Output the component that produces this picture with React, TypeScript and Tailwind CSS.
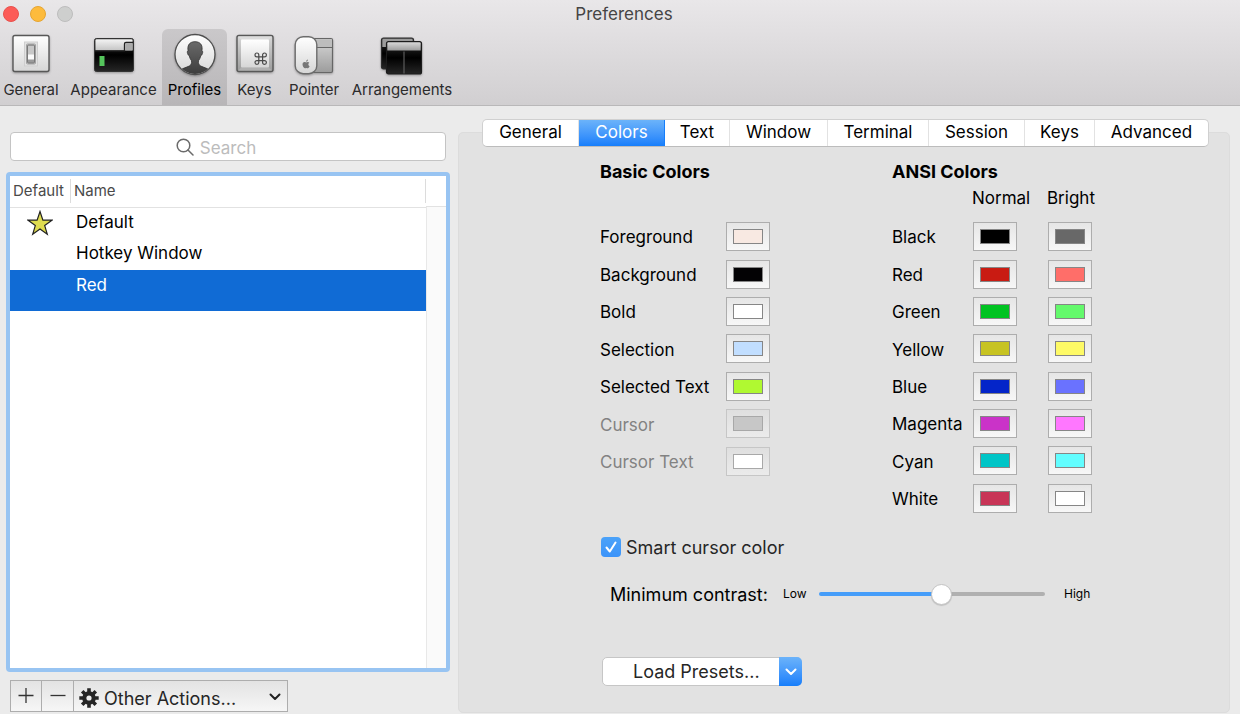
import { useState } from "react";
import type { ReactNode } from "react";

type Swatch = { name: string; value: string; disabled?: boolean };

const basicColors: Swatch[] = [
  { name: "Foreground", value: "#f8e9e2" },
  { name: "Background", value: "#030204" },
  { name: "Bold", value: "#ffffff" },
  { name: "Selection", value: "#c1deff" },
  { name: "Selected Text", value: "#b0f931" },
  { name: "Cursor", value: "#c7c7c7", disabled: true },
  { name: "Cursor Text", value: "#ffffff", disabled: true },
];

const ansiColors = [
  { name: "Black", normal: "#000000", bright: "#686868" },
  { name: "Red", normal: "#c91b12", bright: "#ff6e69" },
  { name: "Green", normal: "#00c321", bright: "#64f96c" },
  { name: "Yellow", normal: "#c7c322", bright: "#fefa66" },
  { name: "Blue", normal: "#0425c9", bright: "#6a72ff" },
  { name: "Magenta", normal: "#ca33c8", bright: "#ff77ff" },
  { name: "Cyan", normal: "#00c5c7", bright: "#62fdff" },
  { name: "White", normal: "#c83557", bright: "#ffffff" },
];

const tabs = [
  { name: "General", width: "w-24" },
  { name: "Colors", width: "w-[86px]" },
  { name: "Text", width: "w-[65px]" },
  { name: "Window", width: "w-[98px]" },
  { name: "Terminal", width: "w-[101px]" },
  { name: "Session", width: "w-24" },
  { name: "Keys", width: "w-[70px]" },
  { name: "Advanced", width: "w-[113px]" },
];

function Gradients() {
  return (
    <svg className="absolute size-0" aria-hidden="true">
      <defs>
        <linearGradient id="plate" x1="0" y1="0" x2="0" y2="1">
          <stop offset="0" stopColor="#ffffff" />
          <stop offset="1" stopColor="#d6d6d6" />
        </linearGradient>
        <linearGradient id="bar" x1="0" y1="0" x2="0" y2="1">
          <stop offset="0" stopColor="#f4f4f4" />
          <stop offset="1" stopColor="#c4c4c4" />
        </linearGradient>
        <linearGradient id="grey" x1="0" y1="0" x2="0" y2="1">
          <stop offset="0" stopColor="#d8d8d8" />
          <stop offset="1" stopColor="#9c9c9c" />
        </linearGradient>
        <linearGradient id="dark" x1="0" y1="0" x2="0" y2="1">
          <stop offset="0" stopColor="#2c2c2c" />
          <stop offset="0.5" stopColor="#000000" />
          <stop offset="1" stopColor="#262626" />
        </linearGradient>
        <linearGradient id="person" x1="0" y1="0" x2="0" y2="1">
          <stop offset="0" stopColor="#6a6a6a" />
          <stop offset="1" stopColor="#3a3a3a" />
        </linearGradient>
        <clipPath id="disc">
          <circle cx="22" cy="22" r="19" />
        </clipPath>
      </defs>
    </svg>
  );
}

function Icon({ children }: { children: ReactNode }) {
  return (
    <svg
      viewBox="0 0 44 44"
      className="size-11 drop-shadow-[0_1px_1px_rgba(0,0,0,0.3)]"
      fill="none"
      aria-hidden="true"
    >
      {children}
    </svg>
  );
}

const GeneralIcon = (
  <Icon>
    <rect x="4" y="2.5" width="36" height="36" rx="2" fill="url(#plate)" stroke="#585858" strokeWidth="1.4" />
    <rect x="15.5" y="9" width="13" height="24" fill="#e2e2e2" stroke="#cfcfcf" />
    <rect x="17.5" y="11" width="9" height="20" rx="1" fill="#cccccc" stroke="#a2a2a2" />
    <rect x="18.5" y="12" width="7" height="18" rx="1" fill="#9a9a9a" stroke="#7a7a7a" />
    <path d="M19 12.800h6v9.200h-6z" fill="#c8c8c8" />
    <path d="M19 21.500h6v5h-6z" fill="#fafafa" />
  </Icon>
);

const AppearanceIcon = (
  <Icon>
    <rect x="2.5" y="5.5" width="39" height="33" rx="2" fill="url(#dark)" stroke="#333" />
    <path d="M3.4 17.5V7.5q0-1.3 1.3-1.3h34.6q1.3 0 1.3 1.3v10z" fill="url(#bar)" />
    <path d="M3 17.8h29.5V11q0-1.5 1.5-1.5h7" stroke="#222" strokeWidth="1.3" />
    <path d="M33.2 17.3V11.5q0-1.3 1.3-1.3h6v7.1z" fill="#aaaaaa" />
    <rect x="7.5" y="23" width="5" height="10" fill="#55c55c" />
  </Icon>
);

const ProfilesIcon = (
  <Icon>
    <circle cx="22" cy="21.500" r="20" fill="url(#plate)" stroke="#4e4e4e" strokeWidth="1.3" />
    <g clipPath="url(#disc)">
      <path
        d="M22 8.700c-5 0-7.4 3-7.1 7.6l.2 1.5c-1 .2-.9 1.6-.5 2.7.3 1.2.8 2 1.6 2 .5 2.4 1.3 4 2.3 5.2.3 2.6-.2 4.3-2.3 5.4-3.5 1.5-7 2.3-8.2 4V43h28v-5.900c-1.200-1.700-4.700-2.500-8.200-4-2.100-1.100-2.600-2.800-2.300-5.400 1-1.200 1.800-2.800 2.300-5.200.8 0 1.300-.8 1.600-2 .4-1.100.5-2.500-.5-2.700l.2-1.500c.3-4.600-2.100-7.600-7.100-7.600z"
        fill="url(#person)"
        stroke="#333"
        strokeWidth="0.8"
      />
    </g>
  </Icon>
);

const KeysIcon = (
  <Icon>
    <rect x="4" y="2.500" width="36" height="36" rx="2" fill="url(#grey)" stroke="#585858" strokeWidth="1.4" />
    <path d="M5 3.500h34l-3.500 3.500h-27z" fill="#dcdcdc" />
    <path d="M5 37.500h34l-3.500-3h-27z" fill="#b0b0b0" />
    <rect x="8" y="6.500" width="28" height="28" rx="1" fill="url(#plate)" />
    <path
      d="M25.800 23.800v-1.900a1.900 1.900 0 1 0-1.900 1.900h7.600a1.900 1.900 0 1 0-1.900-1.900v7.600a1.900 1.900 0 1 0 1.900-1.900h-7.600a1.900 1.900 0 1 0 1.900 1.900z"
      stroke="#4a4a4a"
      strokeWidth="1.200"
    />
  </Icon>
);

const PointerIcon = (
  <Icon>
    <rect x="16" y="5.500" width="24.500" height="34" rx="1.500" fill="url(#grey)" stroke="#666" strokeWidth="1.200" />
    <path d="M22 6.200h17.800v7.800H22z" fill="#bdbdbd" />
    <path d="M22 14.500h18" stroke="#666" />
    <rect x="3.200" y="3.700" width="21.600" height="37" rx="8" fill="url(#plate)" stroke="#6c6c6c" strokeWidth="1.400" />
    <path
      d="M14.200 28.700c0-1.300.7-2 1.700-2.200.1 1.200-.6 2-1.700 2.200zm-.2.700c.6 0 1-.4 1.800-.4.600 0 1.200.3 1.500.8-1.500.9-1.200 2.900.3 3.500-.4 1-1 1.900-1.700 1.900-.6 0-.8-.3-1.500-.3s-1 .3-1.500.3c-1.500 0-3.200-3.900-1.900-5.500.9-1 2-.8 3-.3z"
      fill="#777"
    />
  </Icon>
);

const ArrangementsIcon = (
  <Icon>
    <rect x="1.500" y="5" width="32" height="31" rx="2" fill="url(#dark)" stroke="#2c2c2c" strokeWidth="1.200" />
    <path d="M2.300 14V7q0-1.200 1.200-1.200h28q1.200 0 1.200 1.200v7z" fill="#9b9b9b" />
    <rect x="6.500" y="8.500" width="35" height="32.500" rx="2" fill="url(#dark)" stroke="#1c1c1c" strokeWidth="1.200" />
    <path d="M7.300 17.500V10.500q0-1.300 1.200-1.300h31q1.200 0 1.200 1.300v7z" fill="url(#grey)" />
    <path d="M24 18.500v22" stroke="#6a6a6a" />
  </Icon>
);

const tools = [
  { name: "General", icon: GeneralIcon, box: "w-[65px] pr-[3px]" },
  { name: "Appearance", icon: AppearanceIcon, box: "w-[97px]" },
  { name: "Profiles", icon: ProfilesIcon, box: "w-[65px]" },
  { name: "Keys", icon: KeysIcon, box: "w-[55px]" },
  { name: "Pointer", icon: PointerIcon, box: "w-[64px]" },
  { name: "Arrangements", icon: ArrangementsIcon, box: "w-[112px]" },
];

function ColorWell({ label, value, disabled }: { label: string; value: string; disabled?: boolean }) {
  const [color, setColor] = useState(value);
  return (
    <input
      type="color"
      aria-label={label}
      value={color}
      disabled={disabled}
      onChange={(e) => setColor(e.target.value)}
      className="block h-[29px] w-11 appearance-none border border-[#adadad] bg-linear-to-b from-[#e6e6e6] to-[#f7f7f7] p-[6px] disabled:border-[#c6c6c6] disabled:from-[#dfdfdf] disabled:to-[#ebebeb] [&::-webkit-color-swatch]:rounded-none [&::-webkit-color-swatch]:border [&::-webkit-color-swatch]:border-[#868686] disabled:[&::-webkit-color-swatch]:border-[#a8a8a8] [&::-webkit-color-swatch-wrapper]:p-0"
    />
  );
}

function Toolbar() {
  return (
    <header className="border-b border-[#b9b8b9] bg-linear-to-b from-[#e9e7e9] to-[#d1cfd1]">
      <div className="grid h-[29px] grid-cols-[1fr_auto_1fr]">
        <div className="flex gap-[11px] pt-[6px] pl-[3px]">
          <button aria-label="Close" className="size-4 rounded-full border border-[#e9514d] bg-[#fc5b57]" />
          <button aria-label="Minimize" className="size-4 rounded-full border border-[#e6a532] bg-[#fdbb3c]" />
          <button aria-label="Zoom" disabled className="size-4 rounded-full border border-[#bdbdbd] bg-[#cecfce]" />
        </div>
        <h1 className="pl-2 text-[17px] leading-7 text-[#454445]">Preferences</h1>
      </div>
      <nav className="flex h-[76px]">
        {tools.map((t) => (
          <button
            key={t.name}
            className={`flex flex-col items-center rounded-t-md pt-1 text-[15px] leading-5 ${t.box} ${
              t.name === "Profiles" ? "bg-linear-to-b from-[#cac8ca] to-[#b8b6b8] text-black" : "text-[#2c2b2c]"
            }`}
          >
            {t.icon}
            <span className="pt-[3px]">{t.name}</span>
          </button>
        ))}
      </nav>
    </header>
  );
}

function ProfileList() {
  return (
    <aside className="flex w-[458px] shrink-0 flex-col pt-[26px]">
      <div className="relative mr-3 ml-[10px]">
        <input
          type="search"
          aria-label="Search profiles"
          placeholder="Search"
          className="block h-[29px] w-full rounded border border-[#c4c4c4] bg-white pt-[2px] pl-4 text-center text-[17px] text-black outline-none placeholder:text-[#bcbcbc]"
        />
        <svg
          viewBox="0 0 18 18"
          className="absolute top-[6px] left-[166px] size-[18px]"
          fill="none"
          stroke="#6b6b6b"
          strokeWidth="1.500"
          aria-hidden="true"
        >
          <circle cx="7.500" cy="7.500" r="6.300" />
          <path d="M12 12l5 5" strokeLinecap="round" />
        </svg>
      </div>
      <div className="mt-[11px] mr-2 ml-[6px] flex grow flex-col rounded border-4 border-[#98c4f2] bg-white">
        <div className="flex grow">
          <table className="w-[416px] self-start border-collapse text-left">
            <thead className="text-[15px] text-[#4a4a4a]">
              <tr className="h-[31px] border-b border-[#e2e2e2]">
                <th scope="col" className="w-[61px] p-0 pl-[3px] font-normal">
                  <span className="block border-r border-[#dcdcdc] leading-6">Default</span>
                </th>
                <th scope="col" className="p-0 font-normal">
                  <span className="block border-r border-[#dcdcdc] pl-[3px] leading-6">Name</span>
                </th>
              </tr>
            </thead>
            <tbody className="align-top text-[17px] leading-[30px] text-black">
              <tr className="h-[31px]">
                <td className="p-0">
                  <svg viewBox="0 0 26 26" className="mt-[2px] ml-[17px] size-[26px]" aria-label="Default profile">
                    <path
                      d="M13 1.500l2.900 8.600 9 .1-7.200 5.400 2.600 8.700-7.300-5.200-7.300 5.200 2.600-8.700-7.200-5.400 9-.1z"
                      fill="#dedb4f"
                      stroke="#222"
                      strokeWidth="1.200"
                    />
                  </svg>
                </td>
                <td className="p-0 pl-[5px] leading-7">Default</td>
              </tr>
              <tr className="h-8">
                <td className="p-0" />
                <td className="p-0 pl-[5px]">Hotkey Window</td>
              </tr>
              <tr className="h-[41px] bg-[#106bd5] text-white">
                <td className="p-0" />
                <td className="p-0 pl-[5px]">Red</td>
              </tr>
            </tbody>
          </table>
          <div className="flex grow flex-col">
            <div className="h-[31px] border-b border-[#e2e2e2]" />
            <div className="grow border-l border-[#e8e8e8] bg-[#fafafa]" />
          </div>
        </div>
      </div>
      <div className="mt-2 mb-[2px] ml-[10px] flex h-8 w-[278px] border border-[#adadad] bg-linear-to-b from-[#e3e3e3] to-[#f6f6f6]">
        <button aria-label="Add profile" className="flex w-[31px] items-center justify-center border-r border-[#adadad]">
          <svg viewBox="0 0 16 16" className="size-4" stroke="#333" strokeWidth="1.300" aria-hidden="true">
            <path d="M0.500 7.500h15M8 0v15" />
          </svg>
        </button>
        <button aria-label="Remove profile" className="flex w-8 items-center justify-center border-r border-[#adadad]">
          <svg viewBox="0 0 16 16" className="size-4" stroke="#333" strokeWidth="1.300" aria-hidden="true">
            <path d="M0.500 7.500h15" />
          </svg>
        </button>
        <div className="relative grow">
          <select
            aria-label="Other Actions"
            className="h-full w-full appearance-none bg-transparent pt-1 pl-[30px] text-[18px] text-[#262626] outline-none"
          >
            <option>Other Actions...</option>
          </select>
          <svg viewBox="0 0 20 20" className="pointer-events-none absolute top-[7px] left-[5px] size-5" aria-hidden="true">
            <g stroke="#262626" strokeWidth="3.600">
              <path d="M10 .3v19.400M.3 10h19.400M3.200 3.200l13.600 13.600M16.800 3.200L3.200 16.800" />
            </g>
            <circle cx="10" cy="10" r="6.800" fill="#262626" />
            <circle cx="10" cy="10" r="2.600" fill="#eeeeee" />
          </svg>
          <svg
            viewBox="0 0 12 8"
            className="pointer-events-none absolute top-3 right-[6px] h-2 w-3"
            fill="none"
            stroke="#222"
            strokeWidth="2"
            aria-hidden="true"
          >
            <path d="M1.500 1.500L6 6l4.500-4.500" strokeLinecap="round" strokeLinejoin="round" />
          </svg>
        </div>
      </div>
    </aside>
  );
}

function ColorsPane() {
  const [contrast, setContrast] = useState(54.5);
  return (
    <div className="mx-auto w-[496px] pl-1 text-[17px] text-black">
      <div className="flex justify-between">
        <section className="w-[170px]">
          <h2 className="h-[26px] text-[18px] leading-[26px] font-bold whitespace-nowrap">Basic Colors</h2>
          <div className="mt-[33px] grid h-[262px] grid-rows-7">
            {basicColors.map((c) => (
              <div key={c.name} className="flex items-center justify-between">
                <span className={`pt-[3px] whitespace-nowrap ${c.disabled ? "text-[#828282]" : ""}`}>{c.name}</span>
                <ColorWell label={c.name} value={c.value} disabled={c.disabled} />
              </div>
            ))}
          </div>
        </section>
        <section className="w-[200px]">
          <h2 className="h-[26px] text-[18px] leading-[26px] font-bold">ANSI Colors</h2>
          <div className="grid h-[33px] grid-cols-[75px_44px] pl-20 leading-[26px]">
            <span>Normal</span>
            <span>Bright</span>
          </div>
          <div className="grid h-[299px] grid-rows-8">
            {ansiColors.map((c) => (
              <div key={c.name} className="grid grid-cols-[81px_75px_44px] items-center">
                <span className="pt-[3px]">{c.name}</span>
                <ColorWell label={`${c.name} normal`} value={c.normal} />
                <ColorWell label={`${c.name} bright`} value={c.bright} />
              </div>
            ))}
          </div>
        </section>
      </div>
      <label className="mt-[18px] flex h-6 items-center gap-[5px] text-[18px] text-[#262626]">
        <span className="relative ml-px flex size-5">
          <input
            type="checkbox"
            defaultChecked
            className="peer size-5 appearance-none rounded-[4px] bg-white checked:bg-linear-to-b checked:from-[#4ba2f9] checked:to-[#3b93f9]"
          />
          <svg
            viewBox="0 0 20 20"
            className="pointer-events-none absolute inset-0 hidden size-5 peer-checked:block"
            fill="none"
            stroke="#fff"
            strokeWidth="2"
            strokeLinecap="round"
            strokeLinejoin="round"
            aria-hidden="true"
          >
            <path d="M5.500 10.500l3.300 4 5.700-9" />
          </svg>
        </span>
        Smart cursor color
      </label>
      <div className="mt-[23px] flex h-6 items-center pl-[10px]">
        <label htmlFor="contrast" className="w-[173px] text-[18px] whitespace-nowrap">
          Minimum contrast:
        </label>
        <span className="w-9 text-[12px]">Low</span>
        <input
          id="contrast"
          type="range"
          min="0"
          max="100"
          step="0.5"
          value={contrast}
          onChange={(e) => setContrast(Number(e.target.value))}
          className="h-1 w-[226px] appearance-none rounded-full outline-none [&::-webkit-slider-thumb]:size-[21px] [&::-webkit-slider-thumb]:appearance-none [&::-webkit-slider-thumb]:rounded-full [&::-webkit-slider-thumb]:border [&::-webkit-slider-thumb]:border-[#c4c4c4] [&::-webkit-slider-thumb]:bg-white [&::-webkit-slider-thumb]:shadow-[0_1px_1px_rgba(0,0,0,0.15)]"
          style={{ background: `linear-gradient(to right, #459df9 ${contrast}%, #b0b0b0 ${contrast}%)` }}
        />
        <span className="pl-[19px] text-[12px]">High</span>
      </div>
      <div className="relative mt-[51px] ml-[2px] flex h-[29px] w-[200px] rounded-[5px] border border-[#c6c6c6] bg-white">
        <select
          aria-label="Load Presets"
          className="h-full w-full appearance-none bg-transparent pl-[30px] text-[18px] text-[#262626] outline-none"
        >
          <option>Load Presets...</option>
        </select>
        <span className="pointer-events-none absolute -top-px -right-px flex h-[29px] w-[23px] items-center justify-center rounded-r-[5px] bg-linear-to-b from-[#6bb3fa] to-[#157efb]">
          <svg viewBox="0 0 12 8" className="h-2 w-3" fill="none" stroke="#fff" strokeWidth="2" aria-hidden="true">
            <path d="M1.500 1.500L6 6l4.500-4.500" strokeLinecap="round" strokeLinejoin="round" />
          </svg>
        </span>
      </div>
    </div>
  );
}

export default function App() {
  const [active, setActive] = useState("Colors");
  return (
    <div className="flex min-h-screen flex-col bg-[#ebebeb] font-[Inter,'Liberation_Sans',sans-serif]">
      <Gradients />
      <Toolbar />
      <main className="flex grow">
        <ProfileList />
        <div className="mt-[26px] mr-[10px] mb-px flex grow flex-col rounded-[5px] border border-[#dcdcdc] bg-[#e2e2e2]">
          <div className="-mt-[14px] flex justify-center pl-[3px]">
            <div
              role="tablist"
              className="flex h-7 overflow-hidden rounded-[5px] border border-[#d0d0d0] border-b-[#bcbcbc] bg-white text-[17px]"
            >
              {tabs.map((t) => (
                <button
                  key={t.name}
                  role="tab"
                  aria-selected={active === t.name}
                  onClick={() => setActive(t.name)}
                  className={`border-r last:border-r-0 ${t.width} ${
                    active === t.name
                      ? "border-[#157efb] bg-linear-to-b from-[#6bb3fa] to-[#157efb] text-white"
                      : "border-[#e2e2e2] text-black"
                  }`}
                >
                  {t.name}
                </button>
              ))}
            </div>
          </div>
          <div className="pt-3">
            <ColorsPane />
          </div>
        </div>
      </main>
    </div>
  );
}
